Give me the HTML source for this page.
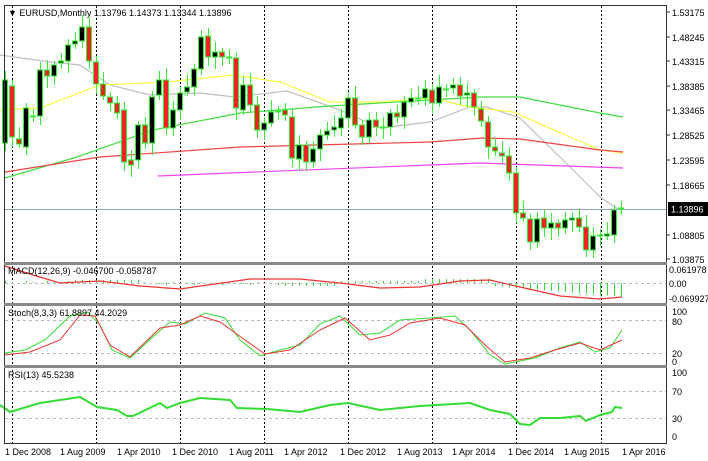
<!DOCTYPE html>
<html><head><meta charset="utf-8">
<style>
html,body{margin:0;padding:0;background:#fff;width:708px;height:461px;overflow:hidden}
svg{display:block}
text{font-family:"Liberation Sans",sans-serif;font-size:9px;fill:#000}
</style></head><body>
<svg id="s" width="708" height="461" xmlns="http://www.w3.org/2000/svg">
<rect width="708" height="461" fill="#fff"/>
<g id="grid" stroke="#000" stroke-width="1" stroke-dasharray="2,2">
<line x1="12.5" y1="6" x2="12.5" y2="443"/><line x1="96.5" y1="6" x2="96.5" y2="443"/>
<line x1="180.5" y1="6" x2="180.5" y2="443"/><line x1="264.5" y1="6" x2="264.5" y2="443"/>
<line x1="348.5" y1="6" x2="348.5" y2="443"/><line x1="432.5" y1="6" x2="432.5" y2="443"/>
<line x1="516.5" y1="6" x2="516.5" y2="443"/><line x1="601.5" y1="6" x2="601.5" y2="443"/>
</g>
<g stroke="#bbb" stroke-dasharray="3,3">
<line x1="5" y1="283.5" x2="666" y2="283.5"/>
<line x1="5" y1="320.5" x2="666" y2="320.5"/><line x1="5" y1="353.5" x2="666" y2="353.5"/>
<line x1="5" y1="391.5" x2="666" y2="391.5"/><line x1="5" y1="418.5" x2="666" y2="418.5"/>
</g>
<line x1="4" y1="209.5" x2="666" y2="209.5" stroke="#8fa3b8"/>
<g fill="none" stroke-width="1.2">
<polyline stroke="#c0c0c0" points="0,55 50,62 80,65 110,85 150,95 200,93 235,97 287,91 340,110 380,128 430,122 470,107 487,107 520,118 570,167 600,197 618,209"/>
<polyline stroke="#ffff44" points="0,110 40,108 100,85 167,82 233,75 280,82 330,102 380,102 430,98 470,107 513,112 570,137 600,150 623,153"/>
<polyline stroke="#44dd44" points="5,178 77,157 153,130 240,113 330,106 430,100 480,97 520,97 600,113 623,117"/>
<polyline stroke="#ee4444" points="5,172 100,157 240,147 430,142 483,138 520,139 600,150 623,152"/>
<polyline stroke="#ee44ee" points="158,176 230,173 430,165 480,163 623,168"/>
</g>
<g id="candles"></g>
<g id="hist" stroke="#33dd33"></g>
<polyline fill="none" stroke="#ee3333" stroke-width="1.2" points="5,266 33,275 60,283 100,281 140,286 180,289 250,279 300,279 340,283 380,288 420,287 460,281 490,280 520,287 560,296 600,299 622,297"/>
<polyline fill="none" stroke="#33dd33" stroke-width="1" points="5,353 25,350 45,340 70,316 88,312 100,325 112,350 130,358 155,335 170,322 185,324 205,313 225,318 240,340 260,356 280,350 300,345 320,324 340,316 360,335 380,333 400,320 430,318 455,316 470,330 490,355 505,364 535,358 560,348 580,342 595,352 610,348 622,330"/>
<polyline fill="none" stroke="#ee3333" stroke-width="1" points="5,355 30,352 60,340 80,315 95,316 110,345 130,357 160,328 180,325 200,316 220,322 245,340 265,354 290,350 320,330 345,318 370,340 390,335 410,323 440,318 465,325 485,345 505,362 530,358 555,350 580,343 600,350 622,340"/>
<polyline fill="none" stroke="#33dd33" stroke-width="2" points="0,405 10,412 40,403 80,397 97,407 117,410 127,416 133,416 160,403 167,408 180,403 200,398 230,400 237,408 267,409 300,412 330,405 348,403 380,410 420,406 470,403 490,410 510,414 520,424 530,425 540,418 560,418 580,416 586,421 600,415 612,412 615,407 622,408"/>
<g fill="none" stroke="#333">
<line x1="4.5" y1="5" x2="4.5" y2="443"/>
<line x1="666.5" y1="5" x2="666.5" y2="443"/>
<line x1="4" y1="5.5" x2="667" y2="5.5"/>
<line x1="4" y1="443.5" x2="667" y2="443.5"/>
</g>
<g fill="#888"><rect x="4" y="262" width="663" height="3"/><rect x="4" y="303" width="663" height="3"/><rect x="4" y="365" width="663" height="3"/></g>
<text x="8" y="16">▼ EURUSD,Monthly  1.13796 1.14373 1.13344 1.13896</text>
<text x="8" y="274">MACD(12,26,9) -0.046700 -0.058787</text>
<text x="8" y="316">Stoch(8,3,3) 61.8897 44.2029</text>
<text x="8" y="378">RSI(13) 45.5238</text>
<rect x="668" y="202" width="40" height="14" fill="#000"/>
<text x="671" y="212.5" style="fill:#fff">1.13896</text>
<g>
<text x="5" y="455">1 Dec 2008</text><text x="60" y="455">1 Aug 2009</text><text x="117" y="455">1 Apr 2010</text>
<text x="172" y="455">1 Dec 2010</text><text x="229" y="455">1 Aug 2011</text><text x="284" y="455">1 Apr 2012</text>
<text x="340" y="455">1 Dec 2012</text><text x="397" y="455">1 Aug 2013</text><text x="452" y="455">1 Apr 2014</text>
<text x="508" y="455">1 Dec 2014</text><text x="564" y="455">1 Aug 2015</text><text x="622" y="455">1 Apr 2016</text>
</g>
<g>
<text x="672" y="16">1.53175</text><text x="672" y="41">1.48245</text><text x="672" y="65">1.43315</text>
<text x="672" y="90">1.38385</text><text x="672" y="114">1.33465</text><text x="672" y="139">1.28525</text>
<text x="672" y="164">1.23595</text><text x="672" y="189">1.18665</text><text x="672" y="239">1.08805</text>
<text x="672" y="263">1.03875</text>
<text x="669" y="273">0.061978</text><text x="669" y="287">0.00</text><text x="669" y="302">-0.069927</text>
<text x="672" y="315">100</text><text x="672" y="325">80</text><text x="672" y="357">20</text><text x="672" y="365">0</text>
<text x="672" y="376">100</text><text x="672" y="395">70</text><text x="672" y="422">30</text><text x="672" y="440">0</text>
</g>
<g stroke="#333"><line x1="667" y1="12" x2="670" y2="12"/><line x1="667" y1="37" x2="670" y2="37"/><line x1="667" y1="61" x2="670" y2="61"/><line x1="667" y1="86" x2="670" y2="86"/><line x1="667" y1="110" x2="670" y2="110"/><line x1="667" y1="135" x2="670" y2="135"/><line x1="667" y1="160" x2="670" y2="160"/><line x1="667" y1="185" x2="670" y2="185"/><line x1="667" y1="235" x2="670" y2="235"/><line x1="667" y1="259" x2="670" y2="259"/></g>
</svg>
<script>
var d=[[143,80],[86,137],[139,144],[147,108],[116,116],[116,70],[70,76],[76,65],[63,61],[61,45],[44,41],[41,27],[27,61],[62,84],[84,96],[97,103],[103,113],[110,162],[160,165],[160,125],[125,143],[143,97],[95,80],[80,128],[128,110],[110,93],[92,87],[87,69],[69,37],[36,57],[57,52],[52,57],[57,58],[58,108],[110,85],[85,105],[105,130],[130,123],[123,112],[112,111],[110,115],[117,158],[159,145],[145,162],[162,149],[149,135],[135,131],[130,127],[128,118],[118,98],[98,125],[125,137],[137,120],[120,127],[127,127],[127,113],[113,117],[117,102],[102,98],[98,98],[98,89],[90,103],[103,87],[89,89],[88,85],[85,96],[95,93],[93,107],[109,121],[122,147],[147,151],[153,156],[156,173],[173,213],[213,218],[219,242],[242,219],[218,228],[228,223],[223,228],[228,220],[220,218],[218,227],[227,250],[250,236],[236,235],[236,234],[235,210],[209,208]];
var ns="http://www.w3.org/2000/svg",g=document.getElementById('candles'),h=document.getElementById('hist');
function el(t,a,p){var e=document.createElementNS(ns,t);for(var k in a)e.setAttribute(k,a[k]);p.appendChild(e);}
var wk=[9,6,12,5,7,8,10,4,8,6,9,12];
d.forEach(function(c,i){var x=5+7*i,t=Math.min(c[0],c[1]),b=Math.max(c[0],c[1]);var u=wk[i%12],l=wk[(i+5)%12];
el('line',{x1:x+.5,y1:t-u,x2:x+.5,y2:b+l,stroke:'#33ee33'},g);
var bull=c[1]<c[0];var hh=Math.max(b-t,1);
el('rect',{x:x-2.5,y:t,width:5,height:hh,fill:bull?'#000':'#ee2222',stroke:'#33ee33','stroke-width':1},g);
var v;if(i<10)v=-2+(i%3);else if(i<20)v=-3;else if(i<40)v=(i%4)-1;else if(i<48)v=3;else if(i<60)v=-2;else if(i<70)v=-4;else v=3+(i-70)*0.6;if(v>15)v=15;
el('line',{x1:x+.5,y1:283,x2:x+.5,y2:283+v},h);
});
</script>
</body></html>
